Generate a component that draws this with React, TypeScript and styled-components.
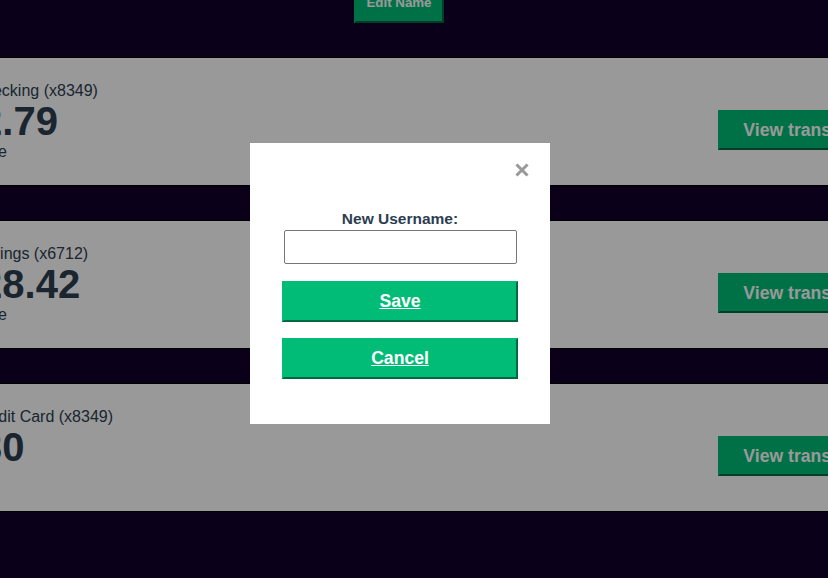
import styled, { createGlobalStyle } from "styled-components";

const GlobalStyle = createGlobalStyle`
  html, body {
    margin: 0;
    padding: 0;
    background-color: #12002b;
    overflow: hidden;
  }

  body {
    font-family: "Liberation Sans", Arial, Helvetica, sans-serif;
    color: #2c3e50;
  }
`;

interface Account {
  title: string;
  amount: string;
  description: string;
}

const accounts: Account[] = [
  { title: "Argent Bank Checking (x8349)", amount: "$2,082.79", description: "Available Balance" },
  { title: "Argent Bank Savings (x6712)", amount: "$10,928.42", description: "Available Balance" },
  { title: "Argent Bank Credit Card (x8349)", amount: "$184.30", description: "Current Balance" },
];

function App() {
  return (
    <>
      <GlobalStyle />
      <Main>
        <Header>
          <EditButton>Edit Name</EditButton>
        </Header>
        {accounts.map((account) => (
          <AccountCard key={account.title}>
            <AccountContent>
              <AccountTitle>{account.title}</AccountTitle>
              <AccountAmount>{account.amount}</AccountAmount>
              <AccountDescription>{account.description}</AccountDescription>
            </AccountContent>
            <TransactionButton>View transactions</TransactionButton>
          </AccountCard>
        ))}
      </Main>

      <Overlay>
        <Modal>
          <CloseButton aria-label="close">
            <svg width="14" height="14" viewBox="0 0 14 14">
              <path d="M2.5 2.5 L11.5 11.5 M11.5 2.5 L2.5 11.5" stroke="#999" strokeWidth="3" strokeLinecap="square" />
            </svg>
          </CloseButton>
          <Form>
            <Label htmlFor="username">New Username:</Label>
            <Input id="username" type="text" />
            <ModalButton type="button">Save</ModalButton>
            <ModalButton type="button">Cancel</ModalButton>
          </Form>
        </Modal>
      </Overlay>
    </>
  );
}

export default App;

// the page is wider than the window, the screenshot only shows its middle
const Main = styled.main`
  width: 1088px;
  margin-left: -145px;
  box-sizing: border-box;
`;

const Header = styled.div`
  display: flex;
  justify-content: center;
  margin-top: -17px;
  margin-bottom: 34px;
`;

const EditButton = styled.button`
  border: 2px outset #00bc77;
  background-color: #00bc77;
  color: #fff;
  font-family: "Liberation Sans", Arial, sans-serif;
  font-weight: bold;
  font-size: 13.3px;
  line-height: 16px;
  padding: 10px;
`;

const AccountCard = styled.section`
  display: flex;
  justify-content: space-between;
  align-items: center;
  background-color: #fff;
  border: 1px solid black;
  box-sizing: border-box;
  padding: 24px;
  margin-bottom: 34px;
`;

const AccountContent = styled.div`
  display: flex;
  flex-direction: column;
`;

const AccountTitle = styled.h3`
  margin: 0;
  font-size: 16px;
  line-height: 17px;
  font-weight: normal;
`;

const AccountAmount = styled.p`
  margin: 0;
  font-size: 40px;
  line-height: 44px;
  font-weight: bold;
`;

const AccountDescription = styled.p`
  margin: 0;
  font-size: 16px;
  line-height: 18px;
`;

const TransactionButton = styled.button`
  width: 200px;
  margin-top: 16px;
  padding: 8px;
  border: 2px outset #00bc77;
  background-color: #00bc77;
  color: #fff;
  font-family: "Liberation Sans", Arial, sans-serif;
  font-size: 17.6px;
  line-height: 20px;
  font-weight: bold;
`;

const Overlay = styled.div`
  position: fixed;
  inset: 0;
  background-color: rgba(0, 0, 0, 0.4);
`;

const Modal = styled.div`
  position: absolute;
  top: 143px;
  left: 250px;
  width: 300px;
  box-sizing: border-box;
  background-color: #fff;
  padding: 67px 32px 45px;
`;

const CloseButton = styled.button`
  position: absolute;
  top: 20px;
  right: 21px;
  padding: 0;
  border: none;
  background: none;
  display: flex;
`;

const Form = styled.form`
  display: flex;
  flex-direction: column;
  align-items: center;
`;

const Label = styled.label`
  font-size: 15.5px;
  line-height: 18px;
  font-weight: bold;
  color: #2c3e50;
  margin-bottom: 2px;
`;

const Input = styled.input`
  width: 233px;
  height: 34px;
  box-sizing: border-box;
  border: 1px solid #767676;
  border-radius: 2px;
  margin-bottom: 17px;
`;

const ModalButton = styled.button`
  width: 236px;
  height: 41px;
  box-sizing: border-box;
  border: 2px outset #00bc77;
  background-color: #00bc77;
  color: #fff;
  font-family: "Liberation Sans", Arial, sans-serif;
  font-size: 17.6px;
  font-weight: bold;
  text-decoration: underline;
  margin-bottom: 16px;

  &:last-child {
    margin-bottom: 0;
  }
`;
